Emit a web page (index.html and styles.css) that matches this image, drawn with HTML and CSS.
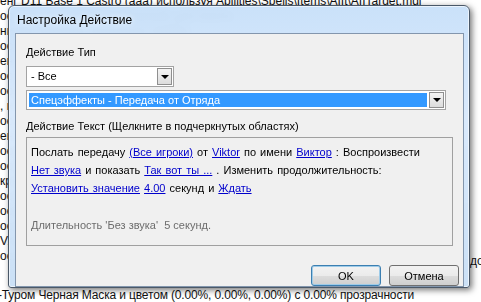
FILE: index.html
```html
<!DOCTYPE html>
<html lang="ru">
<head>
    <meta charset="UTF-8">
    <title>Настройка Действие</title>
    <link rel="stylesheet" href="styles.css">
</head>
<body>

<div class="desktop">
    <div class="bg-text">
        <div class="bg-line">енг D11 Base 1 Castro (ааа) используя Abilities\Spells\Items\AIIt\AIITarget.mdl</div>
        <div class="bg-line">ооздать спецэффект (Нижний) для юнита</div>
        <div class="bg-line">ниции (Начало) используя Abilities</div>
        <div class="bg-line">ооздать спецэффект для юнита</div>
        <div class="bg-line">енг Передача от Отряда игрок</div>
        <div class="bg-line">ооздать спецэффект</div>
        <div class="bg-line">ооздать спецэффект для юнита</div>
        <div class="bg-line">, и показать сообщение</div>
        <div class="bg-line">ооздать спецэффект</div>
        <div class="bg-line">енг Передача игрок</div>
        <div class="bg-line">ооздать</div>
        <div class="bg-line">ооздать спецэффект</div>
        <div class="bg-line">крыть</div>
        <div class="bg-line">ооздать</div>
        <div class="bg-line">ооздать</div>
        <div class="bg-line">ооздать</div>
        <div class="bg-line">Vлать</div>
        <div class="bg-line">ооздать</div>
    </div>
    <div class="bg-right">дол</div>
    <div class="bg-bottom">-Туром Черная Маска и цветом (0.00%, 0.00%, 0.00%) с 0.00% прозрачности</div>

    <div class="window">
        <div class="titlebar">Настройка Действие</div>
        <div class="client">
            <div class="label">Действие Тип</div>
            <div class="combo combo-small">
                <span class="combo-value">- Все</span>
                <span class="combo-btn"><span class="arrow"></span></span>
            </div>
            <div class="combo combo-wide">
                <span class="combo-value selected">Спецэффекты - Передача от Отряда</span>
                <span class="combo-btn"><span class="arrow"></span></span>
            </div>

            <div class="label label-text">Действие Текст (Щелкните в подчеркнутых областях)</div>
            <div class="panel">
                <div class="line">Послать передачу <a href="#">(Все игроки)</a> от <a href="#">Viktor</a> по имени <a href="#">Виктор</a> : Воспроизвести</div>
                <div class="line"><a href="#">Нет звука</a> и показать <a href="#">Так вот ты ...</a> . Изменить продолжительность:</div>
                <div class="line"><a href="#">Установить значение</a> <a href="#">4.00</a> секунд и <a href="#">Ждать</a></div>
                <div class="note">Длительность 'Без звука'  5 секунд.</div>
            </div>

            <div class="buttons">
                <button type="button" class="btn btn-default">OK</button>
                <button type="button" class="btn">Отмена</button>
            </div>
        </div>
    </div>
</div>

</body>
</html>
```

FILE: styles.css
```css
html, body {
    margin: 0;
    padding: 0;
}
body {
    width: 481px;
    height: 302px;
    overflow: hidden;
    background-color: #fff;
    font-family: "Liberation Sans", Arial, sans-serif;
}
.desktop {
    position: relative;
    width: 481px;
    height: 302px;
    overflow: hidden;
}

/* texte de l'editeur derriere la fenetre */
.bg-text {
    margin-top: -6px;
    font-size: 12px;
    line-height: 15px;
    color: #111;
}
.bg-line {
    white-space: nowrap;
}
.bg-right {
    position: absolute;
    left: 470px;
    top: 254px;
    font-size: 12px;
    color: #111;
}
.bg-bottom {
    position: absolute;
    left: -2px;
    top: 288px;
    font-size: 12px;
    line-height: 14px;
    letter-spacing: -0.15px;
    color: #111;
    white-space: nowrap;
}

/* fenetre */
.window {
    position: absolute;
    left: 8px;
    top: 5px;
    width: 462px;
    height: 283px;
    box-sizing: border-box;
    border: 1px solid #4a5868;
    border-radius: 6px 6px 3px 3px;
    background: linear-gradient(180deg, rgba(200, 224, 249, 0.96) 0%, rgba(216, 233, 252, 0.97) 40%, rgba(202, 224, 246, 0.98) 100%);
    backdrop-filter: blur(4px);
    box-shadow: 2px 2px 6px rgba(0, 0, 0, 0.55), inset 0 0 0 1px rgba(255, 255, 255, 0.6);
    display: flex;
    flex-direction: column;
    padding: 0 5px 3px 6px;
}
.titlebar {
    height: 27px;
    line-height: 28px;
    font-size: 12px;
    color: #000;
    padding-left: 2px;
    text-shadow: 0 0 6px rgba(255, 255, 255, 0.9);
}
.client {
    flex: 1;
    background-color: #f0f0f0;
    border: 1px solid #8396ad;
    padding: 11px 4px 0 10px;
    font-size: 11px;
    color: #000;
    display: flex;
    flex-direction: column;
}
.label {
    line-height: 14px;
}

/* listes deroulantes */
.combo {
    display: flex;
    align-items: stretch;
    box-sizing: border-box;
    background-color: #fff;
    border: 1px solid #a3a3a3;
    padding: 1px;
}
.combo-small {
    width: 148px;
    height: 21px;
    margin-top: 7px;
}
.combo-wide {
    width: 420px;
    height: 20px;
    margin-top: 3px;
}
.combo-value {
    flex: 1;
    line-height: 17px;
    padding-left: 3px;
}
.combo-value.selected {
    background-color: #3399ff;
    color: #fff;
    margin: 1px 2px 1px 1px;
    line-height: 14px;
    padding-left: 2px;
}
.combo-btn {
    width: 15px;
    box-sizing: border-box;
    border: 1px solid #8f8f8f;
    background: linear-gradient(180deg, #f4f4f4, #dcdcdc);
    display: flex;
    align-items: center;
    justify-content: center;
}
.arrow {
    width: 0;
    height: 0;
    border-left: 4px solid transparent;
    border-right: 4px solid transparent;
    border-top: 4px solid #000;
}

/* texte de l'action */
.label-text {
    margin-top: 9px;
}
.panel {
    width: 427px;
    height: 109px;
    box-sizing: border-box;
    margin-top: 4px;
    border: 1px solid #a0a0a0;
    padding: 5px 0 0 4px;
}
.line {
    line-height: 18px;
    white-space: nowrap;
    word-spacing: 1px;
}
.line a {
    color: #0000cc;
    text-decoration: underline;
}
.note {
    margin-top: 19px;
    line-height: 18px;
    color: #6d6d6d;
    white-space: pre;
}

/* boutons */
.buttons {
    display: flex;
    justify-content: flex-end;
    gap: 8px;
    margin-top: 19px;
}
.btn {
    height: 21px;
    width: 70px;
    padding: 0;
    font-family: "Liberation Sans", Arial, sans-serif;
    font-size: 11px;
    color: #000;
    border: 1px solid #707070;
    border-radius: 3px;
    background: linear-gradient(180deg, #f2f2f2 0%, #ebebeb 50%, #dddddd 51%, #cfcfcf 100%);
}
.btn-default {
    border-color: #3c7fb1;
    box-shadow: inset 0 0 0 1px #9ecbe8;
}
```
